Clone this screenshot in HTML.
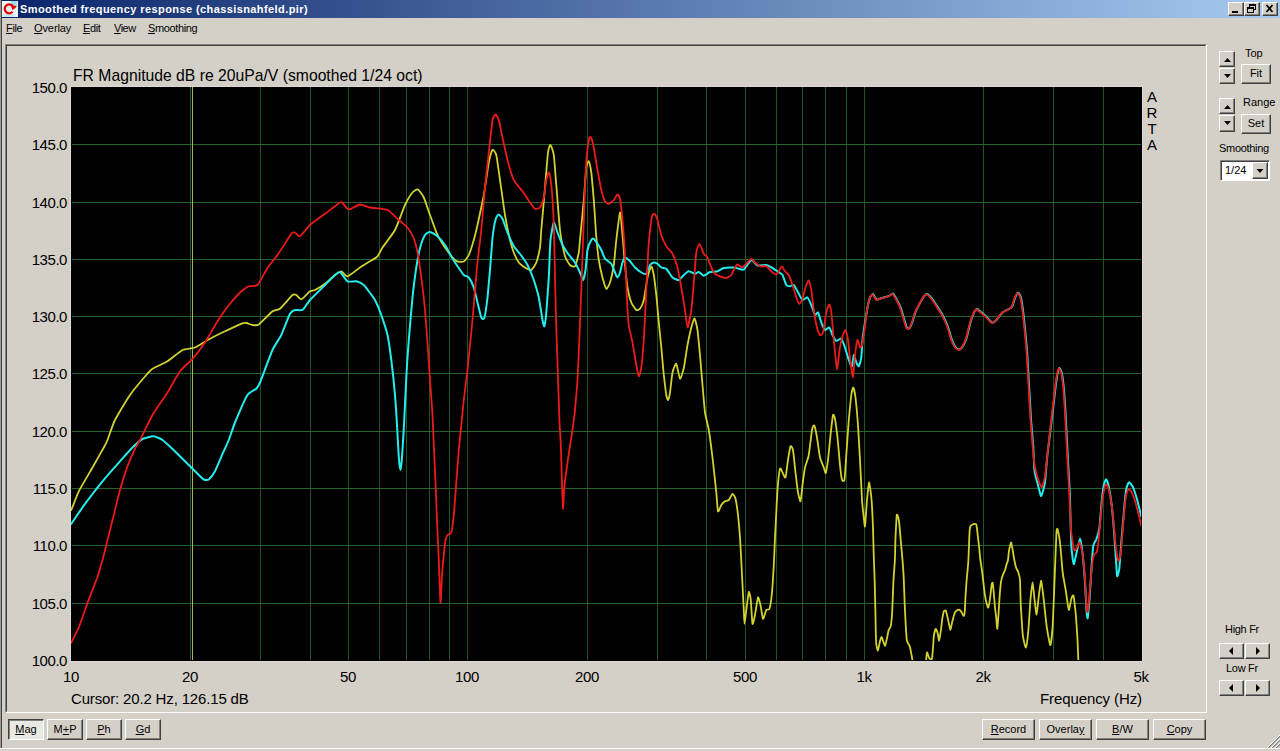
<!DOCTYPE html>
<html><head><meta charset="utf-8"><title>Smoothed frequency response</title>
<style>
html,body{margin:0;padding:0;}
body{width:1280px;height:751px;background:#d4d0c8;position:relative;overflow:hidden;font-family:"Liberation Sans",sans-serif;font-size:11px;color:#000;}
div{position:absolute;box-sizing:border-box;white-space:nowrap;}
.tb{left:2px;top:0;width:1278px;height:18px;background:linear-gradient(to right,#0a246a 0%,#a6caf0 100%);}
.tt{left:20px;top:2px;color:#fff;font-weight:bold;font-size:11px;line-height:14px;letter-spacing:.41px;}
.btn{background:#d4d0c8;border:1px solid;border-color:#fff #404040 #404040 #fff;box-shadow:inset -1px -1px 0 #808080;text-align:center;font-size:11px;}
.btn.p{border-color:#404040 #fff #fff #404040;box-shadow:inset 1px 1px 0 #808080;background:#eae8e3;}
.m{top:22px;font-size:11px;line-height:13px;}
u{text-decoration:underline;}
.panel{left:5px;top:44px;width:1202px;height:669px;border:1px solid;border-color:#808080 #fff #fff #808080;}
.panel2{left:6px;top:45px;width:1200px;height:667px;border:1px solid;border-color:#404040 #d4d0c8 #d4d0c8 #404040;}
.plot{left:71px;top:87px;width:1071px;height:574px;background:#000;box-shadow:0 0 0 1px #dcd9d2;}
.ax{font-size:15px;line-height:16px;}
.yl{left:20px;width:47px;text-align:right;font-size:15px;line-height:16px;letter-spacing:-.45px;}
.xl{top:669px;width:60px;text-align:center;font-size:15px;line-height:16px;letter-spacing:-.3px;}
.lb{font-size:11px;line-height:13px;}
</style></head><body>
<div style="left:0;top:0;width:1px;height:748px;background:#a09c94"></div>
<div style="left:1px;top:0;width:1px;height:748px;background:#404040"></div>
<div class="tb"></div>
<svg style="position:absolute;left:2px;top:1px" width="16" height="16" viewBox="0 0 16 16">
<rect width="16" height="16" fill="#f2f6f8"/>
<rect x="9" y="0" width="6" height="5" fill="#7fd4e0" opacity=".75"/>
<rect x="1" y="13" width="12" height="3" fill="#bfe6ee" opacity=".8"/>
<circle cx="6.6" cy="7.8" r="2.4" fill="#dff2f5"/>
<path d="M10.4 4.6 A4.5 4.5 0 1 0 10.6 10.8" fill="none" stroke="#e60000" stroke-width="2.3"/>
<path d="M8.2 3.2 L15 5.6 L10.6 9.2 Z" fill="#e60000"/>
</svg>
<div class="tt">Smoothed frequency response (chassisnahfeld.pir)</div>
<!-- title buttons -->
<div class="btn" style="left:1228px;top:2px;width:16px;height:14px"></div>
<div class="btn" style="left:1244px;top:2px;width:16px;height:14px"></div>
<div class="btn" style="left:1262px;top:2px;width:16px;height:14px"></div>
<svg style="position:absolute;left:1228px;top:2px" width="50" height="14" viewBox="0 0 50 14">
<rect x="4" y="9" width="6" height="2" fill="#000"/>
<path shape-rendering="crispEdges" d="M21.5 2.5h6v5h-6z M21.5 3.5h6 M19.5 5.500h6v5h-6z M19.5 6.500h6" fill="none" stroke="#000" stroke-width="1"/><rect x="20" y="7" width="5" height="3" fill="#d4d0c8"/>
<path d="M38.5 3 L44.5 10 M44.5 3 L38.5 10" stroke="#000" stroke-width="1.8" fill="none"/>
</svg>
<!-- menu -->
<div class="m" style="left:6px;letter-spacing:-.35px"><u>F</u>ile</div>
<div class="m" style="left:34px;letter-spacing:-.1px"><u>O</u>verlay</div>
<div class="m" style="left:83px;letter-spacing:-.4px"><u>E</u>dit</div>
<div class="m" style="left:114px;letter-spacing:-.5px"><u>V</u>iew</div>
<div class="m" style="left:148px;letter-spacing:-.38px"><u>S</u>moothing</div>
<div class="panel"></div><div class="panel2"></div>
<div class="ax" style="left:73px;top:68px;font-size:15.72px">FR Magnitude dB re 20uPa/V (smoothed 1/24 oct)</div>
<div class="plot"></div>
<svg style="position:absolute;left:71px;top:87px" width="1070" height="573" viewBox="0 0 1070 573">
<g stroke="#24642f" stroke-width="1" shape-rendering="crispEdges">
<line stroke="#1e5527" x1="119.5" y1="0" x2="119.5" y2="573"/>
<line stroke="#1e5527" x1="189.5" y1="0" x2="189.5" y2="573"/>
<line stroke="#1e5527" x1="239.5" y1="0" x2="239.5" y2="573"/>
<line stroke="#1e5527" x1="277.5" y1="0" x2="277.5" y2="573"/>
<line stroke="#1e5527" x1="308.5" y1="0" x2="308.5" y2="573"/>
<line stroke="#1e5527" x1="335.5" y1="0" x2="335.5" y2="573"/>
<line stroke="#1e5527" x1="358.5" y1="0" x2="358.5" y2="573"/>
<line stroke="#1e5527" x1="378.5" y1="0" x2="378.5" y2="573"/>
<line stroke="#1e5527" x1="396.5" y1="0" x2="396.5" y2="573"/>
<line stroke="#1e5527" x1="516.5" y1="0" x2="516.5" y2="573"/>
<line stroke="#1e5527" x1="586.5" y1="0" x2="586.5" y2="573"/>
<line stroke="#1e5527" x1="635.5" y1="0" x2="635.5" y2="573"/>
<line stroke="#1e5527" x1="674.5" y1="0" x2="674.5" y2="573"/>
<line stroke="#1e5527" x1="705.5" y1="0" x2="705.5" y2="573"/>
<line stroke="#1e5527" x1="731.5" y1="0" x2="731.5" y2="573"/>
<line stroke="#1e5527" x1="754.5" y1="0" x2="754.5" y2="573"/>
<line stroke="#1e5527" x1="775.5" y1="0" x2="775.5" y2="573"/>
<line stroke="#1e5527" x1="793.5" y1="0" x2="793.5" y2="573"/>
<line stroke="#1e5527" x1="912.5" y1="0" x2="912.5" y2="573"/>
<line stroke="#1e5527" x1="982.5" y1="0" x2="982.5" y2="573"/>
<line stroke="#1e5527" x1="1032.5" y1="0" x2="1032.5" y2="573"/>
<line x1="1" y1="57.5" x2="1070" y2="57.5"/>
<line x1="1" y1="115.5" x2="1070" y2="115.5"/>
<line x1="1" y1="172.5" x2="1070" y2="172.5"/>
<line x1="1" y1="229.5" x2="1070" y2="229.5"/>
<line x1="1" y1="286.5" x2="1070" y2="286.5"/>
<line x1="1" y1="344.5" x2="1070" y2="344.5"/>
<line x1="1" y1="401.5" x2="1070" y2="401.5"/>
<line x1="1" y1="458.5" x2="1070" y2="458.5"/>
<line x1="1" y1="516.5" x2="1070" y2="516.5"/>
</g>
<line x1="121.5" y1="0" x2="121.5" y2="573" stroke="#a8b250" stroke-width="1" shape-rendering="crispEdges"/>
<g fill="none" stroke-linejoin="round" stroke-linecap="round">
<path stroke="#d2d22e" stroke-width="1.8" d="M0.3 423.0C1.0 421.3 5.9 408.2 7.8 404.3C9.7 400.4 19.2 384.5 21.5 380.5C23.8 376.5 31.4 363.0 32.8 360.5C34.2 358.0 35.5 355.5 36.5 353.0C37.5 350.5 41.9 337.1 44.0 333.0C46.1 328.9 56.1 312.1 59.0 308.0C61.9 303.9 73.2 290.4 75.3 288.0C77.4 285.6 79.6 283.1 81.5 281.8C83.4 280.5 93.8 276.0 96.5 274.3C99.2 272.6 109.0 264.3 111.5 263.0C114.0 261.7 121.5 261.5 124.0 260.5C126.5 259.5 136.2 253.3 139.0 251.8C141.8 250.3 151.2 245.6 154.0 244.3C156.8 243.0 167.0 238.1 169.0 237.3C171.0 236.5 174.2 235.9 175.3 236.0C176.4 236.1 180.4 237.9 181.5 238.0C182.6 238.1 186.0 238.8 187.8 237.5C189.6 236.2 199.6 225.7 201.5 224.3C203.4 222.9 207.2 223.3 209.0 221.8C210.8 220.3 220.0 209.3 221.5 208.0C223.0 206.7 224.5 207.6 225.3 208.0C226.1 208.4 229.0 212.6 230.3 212.3C231.6 212.0 237.7 205.2 239.0 204.3C240.3 203.4 242.6 203.7 244.0 203.0C245.4 202.3 252.2 198.2 254.0 196.8C255.8 195.4 262.5 189.1 264.0 188.0C265.5 186.9 269.2 184.2 270.3 184.3C271.4 184.4 274.8 189.6 276.5 189.3C278.2 189.0 286.9 181.9 289.0 180.5C291.1 179.1 297.4 175.3 299.0 174.3C300.6 173.3 305.4 170.6 306.5 169.3C307.6 168.0 309.9 162.9 311.5 160.5C313.1 158.1 321.9 146.9 324.0 143.0C326.1 139.1 332.4 121.4 334.0 118.0C335.6 114.6 340.3 106.9 341.5 105.5C342.7 104.1 346.0 102.0 347.0 102.5C348.0 103.0 351.7 108.2 352.8 110.5C353.9 112.8 357.7 124.6 359.0 128.0C360.3 131.4 364.9 144.7 366.5 148.0C368.1 151.3 374.8 161.6 376.5 164.0C378.2 166.4 383.8 173.0 385.3 174.0C386.8 175.0 391.7 175.1 392.8 174.5C393.9 173.9 396.9 170.0 397.8 168.0C398.7 166.0 402.0 155.8 402.8 153.0C403.6 150.2 405.6 142.1 406.5 138.0C407.4 133.9 411.8 113.7 412.8 108.0C413.8 102.3 417.0 79.6 417.8 75.5C418.6 71.4 420.8 63.7 421.5 63.0C422.2 62.3 424.6 65.2 425.3 68.0C426.0 70.8 428.2 87.5 429.0 93.0C429.8 98.5 433.1 122.5 434.0 128.0C434.9 133.5 438.2 149.6 439.0 153.0C439.8 156.4 442.0 163.4 442.8 165.5C443.6 167.6 446.8 174.1 447.8 175.5C448.8 176.9 452.9 179.8 454.0 180.5C455.1 181.2 459.3 183.5 460.3 183.0C461.3 182.5 464.5 177.6 465.3 175.5C466.1 173.4 468.5 163.5 469.0 160.5C469.5 157.5 469.8 148.5 470.3 143.0C470.8 137.5 473.4 107.6 474.0 100.5C474.6 93.4 476.5 69.4 477.0 65.5C477.5 61.6 479.0 57.8 479.5 58.0C480.0 58.2 482.3 64.3 482.8 68.0C483.3 71.7 484.7 91.1 485.3 98.0C485.9 104.9 488.2 136.5 489.0 143.0C489.8 149.5 493.1 165.8 494.0 169.0C494.9 172.2 498.1 177.1 499.0 178.0C499.9 178.9 503.2 180.4 504.0 179.3C504.8 178.2 507.3 167.9 507.8 165.5C508.3 163.1 508.5 157.8 509.0 153.0C509.5 148.2 512.2 119.6 512.8 113.0C513.4 106.4 514.8 84.0 515.3 80.5C515.8 77.0 517.3 73.8 517.8 74.3C518.3 74.8 519.8 82.0 520.3 85.5C520.8 89.0 522.3 107.1 522.8 113.0C523.3 118.9 524.8 144.5 525.3 150.0C525.8 155.5 527.2 169.3 527.8 173.0C528.4 176.7 530.8 187.9 531.5 190.5C532.2 193.1 534.6 201.3 535.3 201.8C536.0 202.3 538.3 197.7 539.0 195.5C539.7 193.3 542.2 181.9 542.8 178.0C543.4 174.1 544.7 157.8 545.3 153.0C545.9 148.2 548.4 126.0 549.0 125.5C549.6 125.0 551.0 143.2 551.5 148.0C552.0 152.8 553.5 173.2 554.0 178.0C554.5 182.8 555.9 197.1 556.5 200.5C557.1 203.9 559.5 213.4 560.3 215.5C561.1 217.6 564.5 222.4 565.3 223.0C566.1 223.6 568.3 222.7 569.0 221.8C569.7 220.9 572.1 215.9 572.8 213.0C573.5 210.1 575.8 193.6 576.5 190.5C577.2 187.4 579.7 179.5 580.3 179.3C580.9 179.1 582.3 185.4 582.8 188.0C583.3 190.6 584.8 203.6 585.3 208.0C585.8 212.4 587.3 230.7 587.8 235.5C588.3 240.3 589.8 255.7 590.3 260.5C590.8 265.3 592.3 283.6 592.8 288.0C593.3 292.4 594.9 305.7 595.3 308.0C595.7 310.3 596.7 313.2 597.0 313.0C597.3 312.8 598.6 308.0 599.0 305.5C599.4 303.0 600.9 288.1 601.5 285.5C602.1 282.9 604.6 276.2 605.3 276.8C606.0 277.4 608.3 291.4 609.0 291.8C609.7 292.2 612.1 284.1 612.8 281.0C613.5 277.9 615.8 261.7 616.5 258.0C617.2 254.3 619.7 242.9 620.3 240.5C620.9 238.1 622.9 231.1 623.5 231.3C624.1 231.5 626.0 239.6 626.5 243.0C627.0 246.4 628.5 263.0 629.0 268.0C629.5 273.0 631.0 292.7 631.5 298.0C632.0 303.3 633.4 321.4 634.0 325.5C634.6 329.6 637.1 338.9 637.8 343.0C638.5 347.1 640.8 364.8 641.5 370.5C642.2 376.2 644.8 400.6 645.3 405.5C645.8 410.4 646.5 423.2 647.0 424.3C647.5 425.4 649.7 418.9 650.3 418.0C650.9 417.1 653.3 414.8 654.0 414.3C654.7 413.8 657.1 413.7 657.8 413.0C658.5 412.3 660.9 406.9 661.5 406.8C662.1 406.7 664.0 409.9 664.5 411.8C665.0 413.7 666.6 424.5 667.0 428.0C667.4 431.5 668.6 445.0 669.0 450.5C669.4 456.0 670.7 481.4 671.0 488.0C671.3 494.6 672.6 518.5 672.8 523.0C673.0 527.5 673.3 536.8 673.5 536.8C673.7 536.8 674.9 525.9 675.3 523.0C675.7 520.1 677.4 505.9 677.8 505.0C678.2 504.1 679.5 510.1 679.8 513.0C680.1 515.9 681.1 535.4 681.5 536.8C681.9 538.2 683.5 530.4 684.0 528.0C684.5 525.6 686.5 511.4 687.0 510.5C687.5 509.6 689.0 516.0 689.5 518.0C690.0 520.0 691.5 531.3 692.0 531.8C692.5 532.3 694.7 523.9 695.3 523.0C695.9 522.1 698.0 523.4 698.5 521.8C699.0 520.2 700.6 509.5 701.0 505.5C701.4 501.5 702.5 483.0 702.8 478.0C703.1 473.0 703.8 455.3 704.0 450.5C704.2 445.7 705.1 429.9 705.3 425.5C705.5 421.1 706.2 407.0 706.5 403.0C706.8 399.0 708.5 383.4 709.0 381.8C709.5 380.2 711.0 384.7 711.5 385.5C712.0 386.3 714.0 391.6 714.5 390.5C715.0 389.4 716.5 375.9 717.0 373.0C717.5 370.1 719.0 360.2 719.5 359.3C720.0 358.4 721.5 360.6 722.0 363.0C722.5 365.4 724.0 381.6 724.5 385.5C725.0 389.4 726.5 402.9 727.0 405.5C727.5 408.1 729.1 415.0 729.5 414.3C729.9 413.6 731.1 401.1 731.5 398.0C731.9 394.9 733.4 383.2 734.0 380.5C734.6 377.8 737.2 371.4 737.8 368.0C738.4 364.6 740.5 345.7 741.0 343.0C741.5 340.3 742.8 337.8 743.3 338.5C743.8 339.2 745.5 347.6 746.0 350.5C746.5 353.4 748.4 367.8 749.0 370.5C749.6 373.2 752.3 379.1 752.8 380.5C753.3 381.9 754.4 386.7 754.8 386.0C755.2 385.3 756.5 376.7 757.0 373.0C757.5 369.3 759.3 349.6 759.8 345.5C760.3 341.4 761.6 329.3 762.0 328.0C762.4 326.7 763.6 329.7 764.0 331.8C764.4 333.9 766.0 346.3 766.5 350.5C767.0 354.7 768.6 374.1 769.0 378.0C769.4 381.9 770.6 391.7 771.0 393.0C771.4 394.3 773.1 394.8 773.5 392.5C773.9 390.2 774.9 373.5 775.3 368.0C775.7 362.5 777.3 338.5 777.8 333.0C778.3 327.5 779.9 311.0 780.3 308.0C780.7 305.0 781.9 300.3 782.3 300.5C782.7 300.7 784.1 307.1 784.5 310.5C784.9 313.9 786.6 332.3 787.0 338.0C787.4 343.7 788.6 366.1 789.0 373.0C789.4 379.9 790.7 407.7 791.0 413.0C791.3 418.3 792.5 428.1 792.8 430.5C793.1 432.9 793.7 440.9 794.0 439.3C794.3 437.7 795.6 417.0 796.0 413.0C796.4 409.0 797.6 395.8 798.0 395.5C798.4 395.2 799.9 405.8 800.3 410.0C800.7 414.2 801.8 435.2 802.0 441.0C802.2 446.8 802.7 468.1 802.9 473.0C803.1 477.9 803.6 490.3 803.7 495.0C803.8 499.7 804.3 518.8 804.4 524.3C804.5 529.8 804.9 551.4 805.1 555.0C805.3 558.6 806.6 563.8 806.9 563.8C807.2 563.8 808.5 556.3 808.8 555.0C809.1 553.7 810.4 549.9 810.7 549.9C811.0 549.9 812.1 554.2 812.4 555.0C812.7 555.8 813.9 559.1 814.2 558.7C814.5 558.3 815.8 552.1 816.1 550.7C816.4 549.3 817.3 544.4 817.6 543.3C817.9 542.2 819.5 540.6 819.8 538.9C820.1 537.2 821.0 528.3 821.2 524.3C821.4 520.3 822.2 499.7 822.4 495.0C822.6 490.3 823.7 477.1 823.9 473.0C824.1 468.9 824.3 454.6 824.5 450.5C824.7 446.4 825.5 429.6 825.8 428.0C826.1 426.4 827.5 430.9 827.8 433.0C828.1 435.1 829.2 446.8 829.5 450.5C829.8 454.2 831.2 469.3 831.5 473.0C831.8 476.7 832.5 486.6 832.7 490.6C832.9 494.6 833.5 512.7 833.7 517.0C833.9 521.3 834.5 534.1 834.7 537.5C834.9 540.9 835.5 551.6 835.9 553.6C836.3 555.6 838.4 558.2 838.8 559.4C839.2 560.6 840.0 565.4 840.3 566.8C840.6 568.2 841.5 574.2 841.6 575.0"/>
<path stroke="#d2d22e" stroke-width="1.8" d="M855.0 575.0C855.1 574.1 855.7 565.7 856.0 565.3C856.3 564.9 857.6 569.8 857.9 570.4C858.2 571.0 859.0 572.2 859.3 572.3C859.6 572.4 860.9 572.2 861.1 571.2C861.3 570.2 861.8 563.1 862.0 560.9C862.2 558.7 862.7 549.4 863.0 547.7C863.3 546.0 864.6 542.0 864.9 541.9C865.2 541.8 866.4 545.2 866.7 546.3C867.0 547.4 867.8 553.9 868.1 553.6C868.4 553.3 869.6 545.3 869.9 543.3C870.2 541.3 871.0 533.3 871.3 531.6C871.6 529.9 872.5 525.0 872.8 524.3C873.1 523.6 874.4 523.0 874.7 523.5C875.0 524.0 876.2 528.8 876.5 530.1C876.8 531.4 877.8 536.4 878.1 537.5C878.4 538.6 879.2 542.9 879.5 542.6C879.8 542.3 880.9 536.0 881.3 534.5C881.7 533.0 883.1 527.5 883.5 526.5C883.9 525.5 885.2 523.8 885.7 523.5C886.2 523.2 888.1 522.6 888.6 522.8C889.1 523.0 890.4 525.1 890.8 525.7C891.2 526.3 892.4 529.1 892.7 529.0C893.0 528.9 893.6 526.1 893.8 524.3C894.0 522.5 894.3 512.3 894.5 509.6C894.7 506.9 895.3 497.5 895.5 495.0C895.7 492.5 896.5 483.8 896.7 481.8C896.9 479.8 897.3 475.2 897.4 473.0C897.5 470.8 897.9 461.0 898.0 458.0C898.1 455.0 898.7 442.4 899.0 440.5C899.3 438.6 900.9 437.8 901.5 437.5C902.1 437.2 904.8 436.3 905.3 437.5C905.8 438.7 906.7 448.2 907.0 450.5C907.3 452.8 908.2 460.9 908.4 463.0C908.6 465.1 909.1 470.9 909.4 473.0C909.7 475.1 911.0 483.5 911.3 486.2C911.6 488.9 912.9 499.8 913.2 502.3C913.5 504.8 914.6 512.3 915.0 514.0C915.4 515.7 916.8 520.9 917.2 520.6C917.6 520.3 918.8 513.2 919.1 511.1C919.4 509.0 920.4 499.3 920.6 497.9C920.8 496.5 921.4 495.2 921.6 495.7C921.8 496.2 922.4 501.7 922.6 503.8C922.8 505.9 923.6 515.9 923.8 518.4C924.0 520.9 925.1 529.4 925.3 531.6C925.5 533.8 926.1 542.3 926.3 541.9C926.5 541.5 927.3 530.0 927.5 527.2C927.7 524.4 928.3 514.1 928.5 511.1C928.7 508.1 929.7 497.1 930.0 495.0C930.3 492.9 931.5 488.8 931.9 487.7C932.3 486.6 933.7 484.2 934.0 483.3C934.3 482.4 935.2 478.3 935.5 477.4C935.8 476.5 936.8 474.3 937.0 473.0C937.2 471.7 937.8 464.8 938.1 463.2C938.4 461.6 939.8 454.9 940.2 455.5C940.6 456.1 942.3 467.0 942.7 469.3C943.1 471.6 944.6 478.9 945.0 480.3C945.4 481.7 946.8 483.8 947.2 485.0C947.6 486.2 948.8 489.9 949.0 493.0C949.2 496.1 949.5 513.2 949.8 518.3C950.1 523.4 951.4 545.0 951.9 548.9C952.4 552.8 954.4 561.1 954.9 560.5C955.4 559.9 957.0 547.2 957.4 542.8C957.8 538.4 959.1 516.6 959.5 512.2C959.9 507.8 961.2 495.3 961.6 495.3C962.0 495.3 963.1 509.2 963.5 512.2C963.9 515.2 965.2 527.8 965.6 527.5C966.0 527.2 967.4 512.2 967.8 509.1C968.2 506.0 969.8 493.5 970.2 493.8C970.6 494.1 972.2 508.0 972.7 512.2C973.2 516.4 975.1 535.5 975.7 539.7C976.3 543.9 978.8 558.4 979.4 558.1C980.0 557.8 981.4 543.7 981.8 536.7C982.2 529.7 983.7 490.0 984.0 481.6C984.3 473.2 985.3 448.4 985.5 444.8C985.7 441.2 986.4 441.3 986.7 442.4C987.0 443.5 988.8 453.2 989.2 457.1C989.6 461.0 991.1 480.4 991.6 484.6C992.1 488.8 994.1 499.5 994.7 503.0C995.3 506.5 997.3 522.1 997.8 522.9C998.3 523.7 999.8 513.5 1000.2 512.2C1000.6 510.9 1002.0 507.4 1002.4 508.5C1002.8 509.6 1004.1 520.7 1004.5 524.4C1004.9 528.1 1006.0 544.3 1006.3 548.9C1006.6 553.5 1007.3 572.6 1007.4 575.0"/>
<path stroke="#22eeee" stroke-width="2" d="M0.3 436.8C1.6 435.0 11.1 420.7 14.0 416.8C16.9 412.9 28.3 398.2 31.5 394.3C34.7 390.4 46.2 377.4 49.0 374.3C51.8 371.2 59.4 362.5 61.5 360.5C63.6 358.5 69.5 353.0 71.5 352.0C73.5 351.0 81.0 349.2 82.8 349.3C84.6 349.4 89.8 351.8 91.5 353.0C93.2 354.2 99.4 360.0 101.5 362.0C103.6 364.0 111.8 372.1 114.0 374.3C116.2 376.5 123.6 383.8 125.3 385.5C127.0 387.2 131.7 391.9 132.8 392.5C133.9 393.1 136.8 393.3 137.8 392.5C138.8 391.7 142.7 386.7 144.0 384.3C145.3 381.9 150.2 369.7 151.5 366.8C152.8 363.9 156.7 355.9 157.8 353.0C158.9 350.1 162.3 339.6 164.0 335.5C165.7 331.4 174.5 311.1 176.5 308.0C178.5 304.9 184.2 302.9 185.3 301.8C186.4 300.7 187.5 299.1 189.0 295.5C190.5 291.9 199.5 267.4 201.5 263.0C203.5 258.6 208.7 251.3 210.3 248.0C211.9 244.7 217.7 229.1 219.0 226.8C220.3 224.5 222.9 223.3 224.0 223.0C225.1 222.7 230.1 223.9 231.5 223.0C232.9 222.1 236.9 215.3 239.0 213.0C241.1 210.7 251.7 200.3 254.0 198.0C256.3 195.7 262.6 189.2 264.0 188.0C265.4 186.8 267.9 184.4 269.0 185.0C270.1 185.6 275.0 193.4 276.5 194.3C278.0 195.2 283.8 194.0 285.3 194.3C286.8 194.6 291.5 196.9 292.8 198.0C294.1 199.1 298.0 204.6 299.0 206.0C300.0 207.4 303.0 211.0 304.0 213.0C305.0 215.0 309.2 224.8 310.3 228.0C311.4 231.2 315.6 243.9 316.5 248.0C317.4 252.1 319.6 267.5 320.3 273.0C321.0 278.5 323.5 302.0 324.0 308.0C324.5 314.0 325.7 332.3 326.0 338.0C326.3 343.7 327.5 366.4 327.8 370.5C328.1 374.6 329.2 383.0 329.5 383.0C329.8 383.0 330.7 374.6 331.0 370.5C331.3 366.4 332.6 345.3 333.0 338.0C333.4 330.7 334.9 298.3 335.3 290.5C335.7 282.7 337.2 260.3 337.8 253.0C338.4 245.7 340.8 217.1 341.5 210.5C342.2 203.9 344.6 185.0 345.3 180.5C346.0 176.0 348.2 164.0 349.0 161.0C349.8 158.0 353.1 149.5 354.0 148.0C354.9 146.5 357.9 144.9 359.0 145.0C360.1 145.1 365.1 148.1 366.5 149.3C367.9 150.5 372.9 156.4 374.0 158.0C375.1 159.6 377.9 165.0 379.0 167.0C380.1 169.0 385.2 177.4 386.5 179.3C387.8 181.2 391.8 187.0 392.8 188.0C393.8 189.0 396.9 189.4 397.8 190.5C398.7 191.6 402.0 198.2 402.8 200.5C403.6 202.8 405.8 212.8 406.5 215.5C407.2 218.2 409.7 229.1 410.3 230.5C410.9 231.9 412.7 232.8 413.3 231.0C413.9 229.2 416.0 214.9 416.5 210.5C417.0 206.1 418.5 188.5 419.0 183.0C419.5 177.5 421.0 155.7 421.5 151.0C422.0 146.3 424.2 134.0 424.8 131.8C425.4 129.6 427.2 127.5 427.8 127.5C428.4 127.5 430.7 130.2 431.5 131.8C432.3 133.5 435.5 143.0 436.5 145.5C437.5 148.0 441.7 157.3 442.8 159.3C443.9 161.3 447.7 165.3 449.0 167.0C450.3 168.7 455.2 175.6 456.5 178.0C457.8 180.4 461.8 190.0 462.8 193.0C463.8 196.0 467.0 206.8 467.8 210.5C468.6 214.2 471.0 230.4 471.5 233.0C472.0 235.6 473.0 240.0 473.3 239.3C473.6 238.6 474.9 230.0 475.3 225.5C475.7 221.0 477.4 197.1 477.8 190.5C478.2 183.9 479.0 158.0 479.5 153.0C480.0 148.0 482.2 136.2 482.8 135.5C483.4 134.8 485.7 143.4 486.5 145.5C487.3 147.6 490.6 156.1 491.5 158.0C492.4 159.9 495.4 164.4 496.5 166.0C497.6 167.6 502.9 173.7 504.0 175.5C505.1 177.3 508.3 183.9 509.0 185.5C509.7 187.1 511.5 193.2 512.0 193.0C512.5 192.8 514.1 185.8 514.5 183.0C514.9 180.2 516.0 165.8 516.5 163.0C517.0 160.2 519.7 154.0 520.3 153.0C520.9 152.0 522.2 151.5 522.8 151.8C523.4 152.1 525.8 155.8 526.5 156.8C527.2 157.8 529.6 161.6 530.3 163.0C531.0 164.4 533.1 170.5 534.0 171.8C534.9 173.1 539.4 175.5 540.3 176.8C541.2 178.1 543.4 184.2 544.0 185.5C544.6 186.8 546.0 190.5 546.5 190.5C547.0 190.5 548.5 186.9 549.0 185.5C549.5 184.1 551.0 176.9 551.5 175.5C552.0 174.1 553.3 170.6 554.0 170.5C554.7 170.4 558.1 173.4 559.0 174.3C559.9 175.2 563.0 179.5 564.0 180.5C565.0 181.5 569.3 184.9 570.3 185.5C571.3 186.1 574.5 187.5 575.3 186.8C576.1 186.1 578.3 179.0 579.0 178.0C579.7 177.0 582.1 175.6 582.8 175.5C583.5 175.4 585.8 176.3 586.5 176.8C587.2 177.3 589.5 180.0 590.3 180.5C591.1 181.0 594.3 180.9 595.3 181.8C596.3 182.7 600.4 189.5 601.5 190.5C602.6 191.5 606.8 193.2 607.8 193.0C608.8 192.8 611.9 188.8 612.8 188.0C613.7 187.2 616.8 184.4 617.8 184.3C618.8 184.2 623.1 186.7 624.0 186.8C624.9 186.9 627.0 184.8 627.8 185.0C628.6 185.2 631.8 188.8 632.8 188.8C633.8 188.8 637.7 185.4 639.0 185.0C640.3 184.6 645.2 184.7 646.5 184.3C647.8 183.9 651.3 181.3 652.8 181.0C654.3 180.7 661.4 180.4 662.8 180.5C664.2 180.6 666.9 181.6 667.8 181.8C668.7 182.0 671.7 183.3 672.8 182.5C673.9 181.7 679.0 173.4 680.3 173.0C681.6 172.6 685.1 178.0 686.5 178.5C687.9 179.0 693.8 177.7 695.3 178.0C696.8 178.3 701.8 181.2 702.8 181.8C703.8 182.4 705.7 183.7 706.5 184.3C707.3 184.9 710.7 186.7 711.5 188.0C712.3 189.3 714.6 197.0 715.3 198.0C716.0 199.0 718.3 199.3 719.0 199.3C719.7 199.3 722.0 197.3 722.8 198.0C723.6 198.7 727.0 205.4 727.8 206.8C728.6 208.2 730.7 212.7 731.5 213.0C732.3 213.3 735.7 210.0 736.5 210.5C737.3 211.0 739.6 216.4 740.3 218.0C741.0 219.6 743.4 227.3 744.0 228.0C744.6 228.7 746.4 224.8 747.0 225.5C747.6 226.2 749.7 233.9 750.3 235.5C750.9 237.1 753.3 242.5 754.0 243.0C754.7 243.5 757.6 240.0 758.3 240.5C759.0 241.0 760.9 246.8 761.5 248.0C762.1 249.2 764.5 253.5 765.3 253.8C766.1 254.1 769.5 251.2 770.3 251.8C771.1 252.4 773.3 258.6 774.0 260.5C774.7 262.4 777.2 271.3 777.8 273.0C778.4 274.7 780.5 279.8 781.0 279.3C781.5 278.8 782.4 268.3 782.8 268.0C783.2 267.7 784.8 274.5 785.3 275.5C785.8 276.5 787.3 279.8 787.8 279.3C788.3 278.8 790.0 272.9 790.3 270.5C790.6 268.1 791.2 256.2 791.5 253.0C791.8 249.8 793.5 238.5 794.0 235.5C794.5 232.5 796.0 222.8 796.5 220.5C797.0 218.2 798.5 211.7 799.0 210.5C799.5 209.3 801.4 206.9 802.0 207.1C802.6 207.3 804.9 212.3 805.8 212.6C806.7 212.9 810.9 210.9 812.0 210.6C813.1 210.3 817.4 209.3 818.3 208.9C819.2 208.5 821.3 206.1 822.0 206.4C822.7 206.7 825.1 211.3 825.8 212.6C826.5 213.9 828.8 218.3 829.5 220.1C830.2 221.9 832.7 230.7 833.3 232.6C833.9 234.5 835.3 239.8 835.8 240.6C836.3 241.4 837.8 241.8 838.3 241.4C838.8 241.0 840.2 237.9 840.8 236.4C841.4 234.9 843.7 227.1 844.5 225.1C845.3 223.1 848.7 216.6 849.5 215.1C850.3 213.6 852.7 209.6 853.3 208.9C853.9 208.2 855.8 206.9 856.5 207.1C857.2 207.3 859.9 210.3 860.8 211.4C861.7 212.5 864.8 217.3 865.8 218.9C866.8 220.5 871.0 227.0 872.0 228.9C873.0 230.8 876.2 237.9 877.0 240.1C877.8 242.3 880.1 250.8 880.8 252.6C881.5 254.4 883.8 259.2 884.5 260.1C885.2 261.0 887.6 262.7 888.3 262.6C889.0 262.5 891.3 260.0 892.0 258.9C892.7 257.8 895.1 252.3 895.8 250.1C896.5 247.9 898.8 237.4 899.5 235.1C900.2 232.8 902.7 226.3 903.3 225.1C903.9 223.9 905.2 222.1 905.8 222.1C906.4 222.1 908.6 223.9 909.5 224.6C910.4 225.3 914.3 228.8 915.4 229.8C916.5 230.8 920.3 235.3 921.2 235.6C922.1 235.9 924.7 233.6 925.6 232.7C926.5 231.8 930.4 226.3 931.5 225.4C932.6 224.5 936.5 222.9 937.4 222.4C938.3 221.9 940.6 220.6 941.2 219.5C941.8 218.4 943.6 212.0 944.1 210.7C944.6 209.4 946.5 205.7 947.0 205.7C947.5 205.7 949.5 208.4 950.0 210.7C950.5 213.0 952.4 226.6 952.9 231.2C953.4 235.8 955.3 254.7 955.8 260.6C956.3 266.5 957.5 289.3 957.9 295.7C958.3 302.1 959.5 325.0 959.9 330.9C960.3 336.8 962.0 355.4 962.3 360.2C962.6 365.0 963.1 380.1 963.5 383.6C963.9 387.1 966.6 396.6 967.2 398.9C967.8 401.2 969.6 409.3 970.2 409.0C970.8 408.7 973.3 399.7 973.9 395.9C974.5 392.1 975.7 374.2 976.4 368.0C977.1 361.8 980.5 334.7 981.3 328.1C982.1 321.5 984.5 300.1 985.1 295.8C985.7 291.5 987.6 282.0 988.1 281.2C988.6 280.4 990.5 284.9 991.0 287.0C991.5 289.1 992.7 300.0 993.1 304.6C993.5 309.2 994.8 330.7 995.1 336.9C995.4 343.1 996.6 365.6 996.9 372.1C997.2 378.6 998.6 400.0 998.9 407.8C999.2 415.6 999.9 450.8 1000.2 457.1C1000.5 463.4 1002.2 476.2 1002.7 477.0C1003.2 477.8 1004.8 468.6 1005.4 466.3C1006.0 464.0 1008.5 451.6 1009.1 451.6C1009.7 451.6 1011.1 462.4 1011.5 466.0C1011.9 469.6 1013.3 485.8 1013.7 491.0C1014.1 496.2 1015.2 519.3 1015.5 523.0C1015.8 526.7 1016.4 532.2 1016.7 531.1C1017.0 530.0 1018.2 515.9 1018.6 511.0C1019.0 506.1 1020.4 482.8 1020.7 478.0C1021.0 473.2 1021.9 460.9 1022.3 458.6C1022.7 456.3 1024.7 454.1 1025.3 452.5C1025.9 450.9 1027.9 444.6 1028.4 441.0C1028.9 437.4 1030.4 417.0 1030.8 413.0C1031.2 409.0 1032.6 399.3 1033.0 397.4C1033.4 395.5 1034.7 392.1 1035.1 392.2C1035.5 392.3 1037.1 396.7 1037.6 399.0C1038.1 401.3 1040.1 413.1 1040.6 417.3C1041.1 421.5 1042.7 439.9 1043.1 445.0C1043.5 450.1 1044.7 468.9 1045.0 473.0C1045.3 477.1 1045.8 488.4 1046.1 489.2C1046.4 490.0 1047.9 484.9 1048.3 481.6C1048.7 478.3 1050.1 457.9 1050.5 453.0C1050.9 448.1 1052.2 432.7 1052.6 428.0C1053.0 423.3 1054.8 405.0 1055.3 402.0C1055.8 399.0 1057.5 395.3 1058.1 395.2C1058.7 395.1 1061.3 398.9 1062.0 400.4C1062.7 401.9 1064.9 408.5 1065.7 411.2C1066.5 413.9 1069.9 427.8 1070.3 429.5"/>
<path stroke="#ee1a1a" stroke-width="1.8" d="M0.3 555.5C1.0 554.1 6.3 544.1 7.8 540.5C9.3 536.9 14.8 520.6 16.5 516.0C18.2 511.4 25.1 493.9 26.5 490.0C27.9 486.1 30.7 475.9 31.5 473.0C32.3 470.1 34.4 461.7 35.3 458.0C36.2 454.3 40.2 438.0 41.5 433.0C42.8 428.0 47.6 407.9 49.0 403.0C50.4 398.1 55.1 383.1 56.5 379.3C57.9 375.5 62.9 364.2 64.0 361.8C65.1 359.4 67.4 356.1 69.0 353.0C70.6 349.9 79.0 332.4 81.5 328.0C84.0 323.6 94.0 309.5 96.5 305.5C99.0 301.5 106.7 287.4 109.0 284.3C111.3 281.2 119.2 274.4 121.5 271.8C123.8 269.2 131.7 258.9 134.0 255.5C136.3 252.1 144.2 237.8 146.5 234.3C148.8 230.8 156.9 219.4 159.0 216.8C161.1 214.2 167.3 207.1 169.0 205.5C170.7 203.9 176.2 200.0 177.8 199.3C179.4 198.6 184.8 199.7 186.5 198.0C188.2 196.3 194.7 183.8 196.5 181.0C198.3 178.2 204.3 171.1 206.5 168.0C208.7 164.9 218.7 148.9 220.3 146.8C221.9 144.7 223.2 145.3 224.0 145.5C224.8 145.7 227.6 150.0 229.0 149.3C230.4 148.6 236.7 140.1 239.0 138.0C241.3 135.9 251.2 128.9 254.0 126.8C256.8 124.7 267.4 116.5 269.0 115.5C270.6 114.5 270.8 115.4 271.5 116.0C272.2 116.6 275.7 121.3 276.5 121.8C277.3 122.3 278.9 122.2 280.0 121.8C281.1 121.4 287.3 117.6 289.0 117.5C290.7 117.4 296.5 120.0 299.0 120.5C301.5 121.0 313.9 121.9 316.5 123.0C319.1 124.1 326.0 131.4 327.8 133.0C329.6 134.6 335.1 138.8 336.5 140.5C337.9 142.2 341.9 149.2 342.8 151.5C343.7 153.8 345.8 161.9 346.5 165.5C347.2 169.1 349.6 185.2 350.3 190.5C351.0 195.8 353.4 216.4 354.0 223.0C354.6 229.6 356.5 256.6 357.0 263.0C357.5 269.4 358.6 287.0 359.0 293.0C359.4 299.0 361.2 322.0 361.5 328.0C361.8 334.0 362.5 351.8 362.8 358.0C363.1 364.2 364.2 388.6 364.5 395.5C364.8 402.4 365.7 425.9 366.0 433.0C366.3 440.1 367.5 465.4 367.8 473.0C368.1 480.6 369.2 514.1 369.5 515.5C369.8 516.9 370.7 492.4 371.0 488.0C371.3 483.6 372.5 471.2 372.8 468.0C373.1 464.8 374.2 454.8 374.5 453.0C374.8 451.2 376.0 448.7 376.5 448.0C377.0 447.3 379.7 447.3 380.3 445.5C380.9 443.7 382.3 432.6 382.8 428.0C383.3 423.4 384.8 401.5 385.3 395.5C385.8 389.5 387.3 368.3 387.8 363.0C388.3 357.7 389.8 342.6 390.3 338.0C390.8 333.4 392.2 318.0 392.8 313.0C393.4 308.0 395.9 288.0 396.5 283.0C397.1 278.0 398.5 262.6 399.0 258.0C399.5 253.4 401.0 238.0 401.5 233.0C402.0 228.0 403.5 208.3 404.0 203.0C404.5 197.7 405.9 180.5 406.5 175.0C407.1 169.5 409.6 149.8 410.3 143.0C411.0 136.2 413.3 107.6 414.0 100.5C414.7 93.4 417.1 71.7 417.8 65.5C418.5 59.3 420.9 36.5 421.5 33.0C422.1 29.5 423.9 27.5 424.5 27.5C425.1 27.5 427.2 30.9 427.8 33.0C428.4 35.1 430.7 46.8 431.5 50.5C432.3 54.2 435.5 69.1 436.5 73.0C437.5 76.9 441.4 90.1 442.8 93.0C444.2 95.9 450.0 102.2 451.5 104.3C453.0 106.4 457.9 113.9 459.0 115.5C460.1 117.1 463.1 121.3 464.0 121.8C464.9 122.3 468.2 121.5 469.0 120.5C469.8 119.5 472.2 113.0 472.8 110.5C473.4 108.0 474.8 95.3 475.3 93.0C475.8 90.7 477.3 85.0 477.8 85.5C478.3 86.0 479.8 93.2 480.3 98.0C480.8 102.8 482.5 129.5 482.8 138.0C483.1 146.5 483.8 181.1 484.0 190.5C484.2 199.9 485.0 231.3 485.3 240.5C485.6 249.7 486.7 281.8 487.0 290.5C487.3 299.2 488.2 328.8 488.5 335.0C488.8 341.2 489.6 352.5 489.8 358.0C490.0 363.5 490.8 389.7 491.0 395.5C491.2 401.3 491.8 421.6 492.0 421.8C492.2 422.0 493.1 402.2 493.5 398.0C493.9 393.8 495.9 379.9 496.5 375.5C497.1 371.1 499.7 354.4 500.3 350.5C500.9 346.6 502.5 335.5 502.8 333.0C503.1 330.5 503.7 326.7 504.0 323.0C504.3 319.3 506.1 299.9 506.5 293.0C506.9 286.1 508.2 256.2 508.5 248.0C508.8 239.8 510.0 210.3 510.3 203.0C510.6 195.7 511.3 174.4 511.5 168.0C511.7 161.6 512.5 141.5 512.8 133.0C513.1 124.5 514.8 82.8 515.3 75.5C515.8 68.2 517.4 55.3 517.8 53.0C518.2 50.7 519.3 49.3 519.8 50.0C520.3 50.7 522.2 57.5 522.8 60.5C523.4 63.5 525.8 79.1 526.5 83.0C527.2 86.9 529.6 100.1 530.3 103.0C531.0 105.9 533.3 113.0 534.0 114.3C534.7 115.6 537.0 116.9 537.8 116.8C538.6 116.7 542.0 113.9 542.8 113.0C543.6 112.1 545.9 107.6 546.5 107.5C547.1 107.4 548.5 109.5 549.0 111.8C549.5 114.1 551.0 127.8 551.5 133.0C552.0 138.2 553.6 160.7 554.0 168.0C554.4 175.3 555.7 206.6 556.0 213.0C556.3 219.4 557.3 234.1 557.8 238.0C558.3 241.9 560.8 251.8 561.5 255.5C562.2 259.2 564.7 274.9 565.3 278.0C565.9 281.1 567.3 289.1 567.8 289.3C568.3 289.5 569.8 283.8 570.3 280.5C570.8 277.2 572.3 260.1 572.8 253.0C573.3 245.9 574.9 210.8 575.3 203.0C575.7 195.2 576.7 173.0 577.0 168.0C577.3 163.0 578.1 151.5 578.5 148.0C578.9 144.5 580.5 131.2 581.0 129.3C581.5 127.4 583.0 126.5 583.5 126.8C584.0 127.1 585.9 131.1 586.5 133.0C587.1 134.9 589.5 145.6 590.3 148.0C591.1 150.4 594.3 157.6 595.3 159.3C596.3 161.0 600.5 164.9 601.5 166.8C602.5 168.7 605.7 177.4 606.5 180.5C607.3 183.6 609.6 196.6 610.3 200.5C611.0 204.4 613.4 219.3 614.0 223.0C614.6 226.7 615.9 240.5 616.5 240.5C617.1 240.5 619.7 227.1 620.3 223.0C620.9 218.9 622.3 200.8 622.8 195.5C623.3 190.2 624.8 169.0 625.3 165.5C625.8 162.0 627.8 156.7 628.5 156.8C629.2 156.9 632.1 165.5 632.8 166.8C633.5 168.1 635.8 169.2 636.5 170.5C637.2 171.8 639.6 179.0 640.3 180.5C641.0 182.0 643.2 186.0 644.0 186.8C644.8 187.6 648.0 188.9 649.0 189.3C650.0 189.7 654.3 191.1 655.3 191.0C656.3 190.9 659.5 189.0 660.3 188.0C661.1 187.0 663.4 181.5 664.0 180.5C664.6 179.5 665.9 177.5 666.5 177.5C667.1 177.5 670.2 180.6 671.0 180.5C671.8 180.4 674.4 177.6 675.3 176.8C676.2 176.0 679.5 171.9 680.3 171.8C681.1 171.7 683.2 174.8 684.0 175.5C684.8 176.2 688.0 179.0 689.0 179.3C690.0 179.6 694.3 178.8 695.3 179.3C696.3 179.8 699.4 183.5 700.3 184.3C701.2 185.1 704.5 187.6 705.3 187.5C706.1 187.4 708.0 183.8 708.5 183.0C709.0 182.2 710.5 179.2 711.0 179.3C711.5 179.4 713.4 183.5 714.0 184.3C714.6 185.1 717.1 186.7 717.8 188.0C718.5 189.3 720.8 195.9 721.5 198.0C722.2 200.1 724.7 208.8 725.3 210.5C725.9 212.2 727.9 216.7 728.5 216.8C729.1 216.9 730.9 213.4 731.5 211.8C732.1 210.2 734.2 201.0 734.8 199.3C735.4 197.6 737.3 193.2 737.8 193.5C738.3 193.8 739.8 200.3 740.3 203.0C740.8 205.7 742.3 219.6 742.8 223.0C743.3 226.4 745.4 238.2 746.0 240.5C746.6 242.8 748.5 247.5 749.0 248.0C749.5 248.5 751.4 247.6 752.0 245.5C752.6 243.4 754.7 228.1 755.3 225.5C755.9 222.9 757.8 217.5 758.3 217.5C758.8 217.5 759.9 222.2 760.3 225.5C760.7 228.8 762.3 247.8 762.8 253.0C763.3 258.2 765.5 280.9 766.0 281.8C766.5 282.7 768.0 266.0 768.5 263.0C769.0 260.0 771.0 251.1 771.5 249.3C772.0 247.5 774.0 242.7 774.5 243.0C775.0 243.3 776.5 250.0 777.0 253.0C777.5 256.0 779.0 272.1 779.5 275.5C780.0 278.9 781.6 290.7 782.0 290.0C782.4 289.3 783.6 271.4 784.0 268.0C784.4 264.6 786.0 253.7 786.5 253.0C787.0 252.3 788.6 260.0 789.0 260.5C789.4 261.0 790.6 259.6 791.0 258.0C791.4 256.4 793.0 246.2 793.5 243.0C794.0 239.8 795.5 226.0 796.0 223.0C796.5 220.0 798.5 211.9 799.0 210.5C799.5 209.1 800.9 207.3 801.5 207.5C802.1 207.7 804.4 212.7 805.3 213.0C806.2 213.3 810.4 211.3 811.5 211.0C812.6 210.7 816.9 209.7 817.8 209.3C818.7 208.9 820.8 206.5 821.5 206.8C822.2 207.1 824.6 211.7 825.3 213.0C826.0 214.3 828.3 218.7 829.0 220.5C829.7 222.3 832.2 231.1 832.8 233.0C833.4 234.9 834.8 240.2 835.3 241.0C835.8 241.8 837.3 242.2 837.8 241.8C838.3 241.4 839.7 238.3 840.3 236.8C840.9 235.3 843.2 227.5 844.0 225.5C844.8 223.5 848.2 217.0 849.0 215.5C849.8 214.0 852.2 210.0 852.8 209.3C853.4 208.6 855.3 207.3 856.0 207.5C856.7 207.7 859.4 210.7 860.3 211.8C861.2 212.9 864.3 217.7 865.3 219.3C866.3 220.9 870.5 227.4 871.5 229.3C872.5 231.2 875.7 238.3 876.5 240.5C877.3 242.7 879.6 251.2 880.3 253.0C881.0 254.8 883.3 259.6 884.0 260.5C884.7 261.4 887.1 263.1 887.8 263.0C888.5 262.9 890.8 260.4 891.5 259.3C892.2 258.2 894.6 252.7 895.3 250.5C896.0 248.3 898.3 237.8 899.0 235.5C899.7 233.2 902.2 226.7 902.8 225.5C903.4 224.3 904.7 222.5 905.3 222.5C905.9 222.5 908.1 224.3 909.0 225.0C909.9 225.7 913.8 229.2 914.9 230.2C916.0 231.2 919.8 235.7 920.7 236.0C921.6 236.3 924.2 234.0 925.1 233.1C926.0 232.2 929.9 226.7 931.0 225.8C932.1 224.9 936.0 223.3 936.9 222.8C937.8 222.3 940.1 221.0 940.7 219.9C941.3 218.8 943.1 212.4 943.6 211.1C944.1 209.8 946.0 206.1 946.5 206.1C947.0 206.1 949.0 208.8 949.5 211.1C950.0 213.4 951.9 227.0 952.4 231.6C952.9 236.2 954.8 255.1 955.3 261.0C955.8 266.9 957.0 289.7 957.4 296.1C957.8 302.5 959.0 325.4 959.4 331.3C959.8 337.2 961.4 356.4 961.8 360.6C962.2 364.8 963.0 374.5 963.5 377.5C964.0 380.5 966.5 390.7 967.2 392.8C967.9 394.9 970.2 400.7 970.8 400.4C971.4 400.1 973.4 392.7 973.9 389.7C974.4 386.7 975.8 373.6 976.4 368.0C977.0 362.4 980.0 335.0 980.8 328.4C981.6 321.8 984.0 300.4 984.6 296.1C985.2 291.8 987.1 282.3 987.6 281.5C988.1 280.7 990.0 285.2 990.5 287.3C991.0 289.4 992.2 300.3 992.6 304.9C993.0 309.5 994.3 331.0 994.6 337.2C994.9 343.4 996.1 365.9 996.4 372.4C996.7 378.9 998.1 401.5 998.4 408.1C998.7 414.7 999.8 439.7 1000.2 444.8C1000.6 449.9 1002.7 461.8 1003.3 463.2C1003.9 464.6 1005.8 460.8 1006.3 460.1C1006.8 459.4 1008.0 454.9 1008.5 455.5C1009.0 456.1 1011.0 463.3 1011.5 466.3C1012.0 469.3 1013.3 482.9 1013.7 487.7C1014.1 492.5 1015.2 514.9 1015.5 518.3C1015.8 521.7 1016.4 526.1 1016.7 525.0C1017.0 523.9 1018.2 510.0 1018.6 506.0C1019.0 502.0 1020.3 485.1 1020.7 481.6C1021.1 478.1 1022.4 469.3 1022.9 467.8C1023.4 466.3 1025.4 466.8 1025.9 464.7C1026.4 462.6 1028.0 449.1 1028.4 444.8C1028.8 440.5 1030.4 421.2 1030.8 417.3C1031.2 413.4 1032.9 403.8 1033.3 402.0C1033.7 400.2 1034.7 397.4 1035.1 397.4C1035.5 397.4 1037.1 400.2 1037.6 402.0C1038.1 403.8 1040.1 413.7 1040.6 417.3C1041.1 420.9 1042.7 437.6 1043.1 441.8C1043.5 446.0 1044.8 460.3 1045.2 463.2C1045.6 466.1 1047.0 473.6 1047.4 473.9C1047.8 474.2 1049.4 469.8 1049.8 466.3C1050.2 462.8 1051.9 440.7 1052.3 435.6C1052.7 430.5 1054.2 414.3 1054.7 411.2C1055.2 408.1 1057.0 402.6 1057.5 402.0C1058.0 401.4 1059.9 404.0 1060.5 405.0C1061.1 406.0 1063.0 411.0 1063.6 412.7C1064.2 414.4 1066.0 421.0 1066.6 423.4C1067.2 425.8 1070.0 437.3 1070.3 438.7"/>
</g>
</svg>
<div class="yl" style="top:653px">100.0</div>
<div class="yl" style="top:596px">105.0</div>
<div class="yl" style="top:538px">110.0</div>
<div class="yl" style="top:481px">115.0</div>
<div class="yl" style="top:424px">120.0</div>
<div class="yl" style="top:366px">125.0</div>
<div class="yl" style="top:309px">130.0</div>
<div class="yl" style="top:252px">135.0</div>
<div class="yl" style="top:195px">140.0</div>
<div class="yl" style="top:137px">145.0</div>
<div class="yl" style="top:80px">150.0</div>

<div class="xl" style="left:41px">10</div>
<div class="xl" style="left:160px">20</div>
<div class="xl" style="left:318px">50</div>
<div class="xl" style="left:437px">100</div>
<div class="xl" style="left:557px">200</div>
<div class="xl" style="left:715px">500</div>
<div class="xl" style="left:834px">1k</div>
<div class="xl" style="left:953px">2k</div>
<div class="xl" style="left:1111px">5k</div>

<div class="ax" style="left:1146px;top:89px;line-height:16px;text-align:center;width:12px;white-space:normal">A R T A</div>
<div class="ax" style="left:71px;top:691px;letter-spacing:-.16px">Cursor: 20.2 Hz, 126.15 dB</div>
<div class="ax" style="left:1040px;top:691px;letter-spacing:-.1px">Frequency (Hz)</div>
<!-- bottom buttons -->
<div class="btn p" style="left:8px;top:719px;width:36px;height:21px;line-height:19px"><u>M</u>ag</div>
<div class="btn" style="left:47px;top:719px;width:36px;height:21px;line-height:18px">M<u>+</u>P</div>
<div class="btn" style="left:86px;top:719px;width:36px;height:21px;line-height:18px"><u>P</u>h</div>
<div class="btn" style="left:125px;top:719px;width:36px;height:21px;line-height:18px"><u>G</u>d</div>
<div class="btn" style="left:982px;top:719px;width:53px;height:21px;line-height:18px"><u>R</u>ecord</div>
<div class="btn" style="left:1039px;top:719px;width:53px;height:21px;line-height:18px">Overla<u>y</u></div>
<div class="btn" style="left:1096px;top:719px;width:53px;height:21px;line-height:18px"><u>B</u>/W</div>
<div class="btn" style="left:1153px;top:719px;width:53px;height:21px;line-height:18px"><u>C</u>opy</div>
<!-- right controls -->
<div class="btn" style="left:1219px;top:51px;width:16px;height:16px"></div>
<div class="btn" style="left:1219px;top:68px;width:16px;height:16px"></div>
<div class="lb" style="left:1245px;top:47px">Top</div>
<div class="btn" style="left:1241px;top:64px;width:30px;height:20px;line-height:17px">Fit</div>
<div class="btn" style="left:1219px;top:98px;width:16px;height:16px"></div>
<div class="btn" style="left:1219px;top:115px;width:16px;height:17px"></div>
<div class="lb" style="left:1243px;top:96px">Range</div>
<div class="btn" style="left:1241px;top:114px;width:30px;height:20px;line-height:17px">Set</div>
<div class="lb" style="left:1219px;top:142px;letter-spacing:-.3px">Smoothing</div>
<div style="left:1220px;top:160px;width:50px;height:21px;background:#fff;border:1px solid;border-color:#808080 #fff #fff #808080;box-shadow:inset 1px 1px 0 #404040"></div>
<div class="lb" style="left:1225px;top:164px">1/24</div>
<div class="btn" style="left:1252px;top:162px;width:16px;height:17px"></div>
<div class="lb" style="left:1225px;top:623px;letter-spacing:-.3px">High Fr</div>
<div class="btn" style="left:1219px;top:643px;width:25px;height:16px"></div>
<div class="btn" style="left:1245px;top:643px;width:25px;height:16px"></div>
<div class="lb" style="left:1226px;top:662px;letter-spacing:-.3px">Low Fr</div>
<div class="btn" style="left:1219px;top:680px;width:25px;height:16px"></div>
<div class="btn" style="left:1245px;top:680px;width:25px;height:16px"></div>
<svg style="position:absolute;left:1210px;top:40px" width="70" height="711" viewBox="0 0 70 711" fill="#000">
<path d="M14 22h7l-3.5-4z M14 34h7l-3.500 4z M14 69h7l-3.500-4z M14 81h7l-3.500 4z"/>
<path d="M46.500 129h7l-3.500 4z"/>
<path d="M23 607v8l-4-4z M46 607v8l4-4z M23 644v8l-4-4z M46 644v8l4-4z"/>
</svg>
<!-- bottom line + grip -->
<div style="left:0;top:748px;width:1280px;height:1px;background:#fff"></div>
<svg style="position:absolute;left:1266px;top:734px" width="14" height="14" viewBox="0 0 14 14">
<g stroke="#808080" stroke-width="1.4"><path d="M2 14L14 2M6 14L14 6M10 14L14 10"/></g>
<g stroke="#fff" stroke-width="1"><path d="M1 14L14 1M5 14L14 5M9 14L14 9"/></g>
</svg>
</body></html>
